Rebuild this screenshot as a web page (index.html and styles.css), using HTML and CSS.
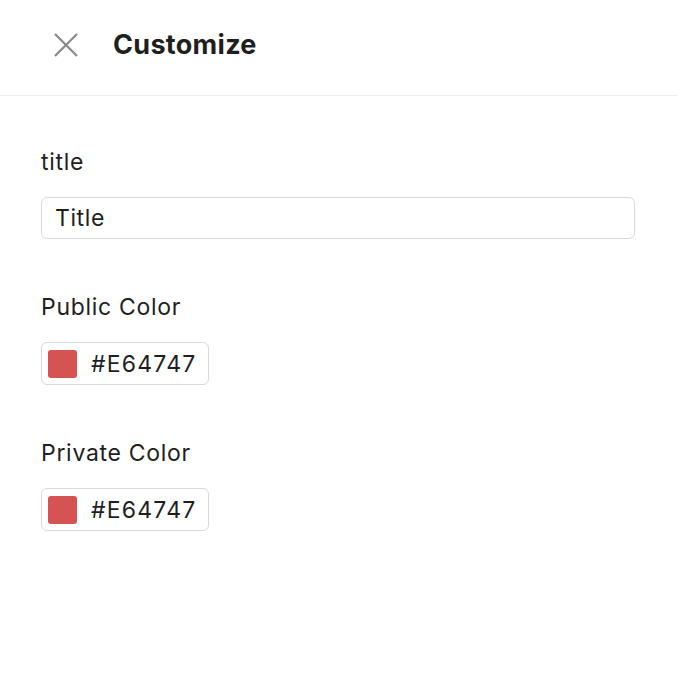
FILE: index.html
```html
<!DOCTYPE html>
<html>
<head>
<meta charset="utf-8">
<link rel="stylesheet" href="styles.css">
</head>
<body>
<div class="panel">
  <header class="header">
    <button class="close" aria-label="Close">
      <svg width="26" height="26" viewBox="0 0 26 26"><path d="M2 2 L24 24 M24 2 L2 24" stroke="#8a8a8a" stroke-width="2.2" fill="none"/></svg>
    </button>
    <h1 class="heading">Customize</h1>
  </header>
  <main class="content">
    <div class="field">
      <label class="label">title</label>
      <div class="input text-input">Title</div>
    </div>
    <div class="field">
      <label class="label">Public Color</label>
      <div class="input color-input"><span class="swatch"></span><span class="hex">#E64747</span></div>
    </div>
    <div class="field">
      <label class="label">Private Color</label>
      <div class="input color-input"><span class="swatch"></span><span class="hex">#E64747</span></div>
    </div>
  </main>
</div>
</body>
</html>
```
FILE: styles.css
```css
* { box-sizing: border-box; }
html, body { margin: 0; padding: 0; background: #fff; }
body { font-family: Inter, "Noto Sans", sans-serif; color: #1f1f1f; }
.panel { width: 678px; }
.header {
  height: 96px;
  border-bottom: 1px solid #ececec;
  display: flex;
  align-items: center;
  padding-left: 53px;
  padding-bottom: 6px;
}
.close { border: 0; background: none; padding: 0; width: 26px; height: 26px; display: flex; margin-right: 34px; }
.heading { margin: 0; font-size: 27px; font-weight: 700; letter-spacing: 0.3px; line-height: 32px; }
.content { padding: 53px 43px 0 41px; display: flex; flex-direction: column; gap: 55px; }
.field { display: flex; flex-direction: column; align-items: flex-start; }
.label { font-size: 23px; letter-spacing: 0.7px; line-height: 26px; margin-bottom: 22px; }
.input {
  border: 1px solid #d9d9d9;
  border-radius: 6px;
  height: 42px;
  font-size: 23px;
  letter-spacing: 0.6px;
  display: flex;
  align-items: center;
}
.text-input { align-self: stretch; padding-left: 13px; }
.color-input { padding: 0 12px 0 6px; height: 43px; }
.swatch { width: 29px; height: 28px; border-radius: 3px; background: #d55350; margin-right: 14px; }
.hex { font-size: 23px; letter-spacing: 1.2px; }
```
